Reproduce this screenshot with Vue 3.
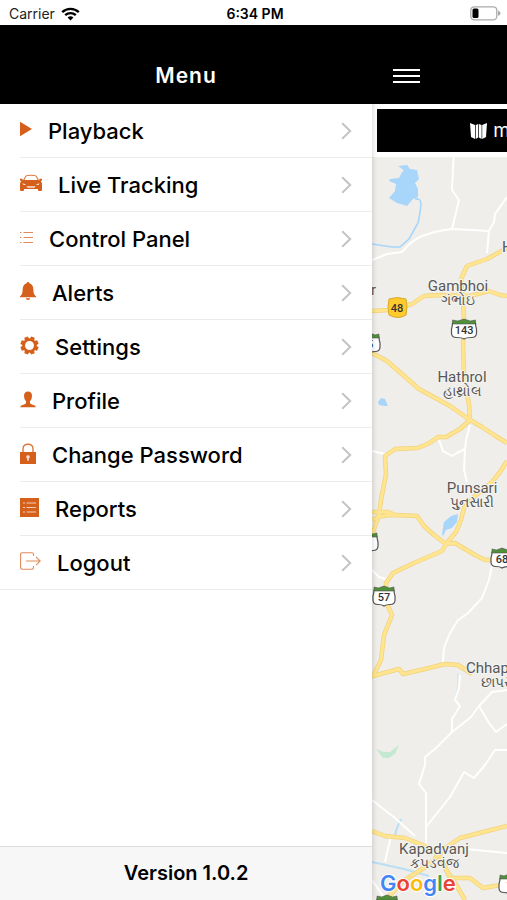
<script setup>
const items = [
  { label: 'Playback', icon: 'play', w: 12, h: 16 },
  { label: 'Live Tracking', icon: 'car', w: 22, h: 18 },
  { label: 'Control Panel', icon: 'list', w: 13, h: 13 },
  { label: 'Alerts', icon: 'bell', w: 16, h: 20 },
  { label: 'Settings', icon: 'gear', w: 19, h: 19 },
  { label: 'Profile', icon: 'person', w: 16, h: 17 },
  { label: 'Change Password', icon: 'lock', w: 16, h: 21 },
  { label: 'Reports', icon: 'report', w: 19, h: 19 },
  { label: 'Logout', icon: 'exit', w: 21, h: 18 }
]

const minorRoads = [
  'M454 150 452 190 459 200 452 229',
  'M372 260 387 254 402 252 Q411 241 420 237 Q434 231 452 229 L489 231 494 222 495 214 507 197',
  'M489 231 487 253',
  'M439 440 443 451 452 456 457 453 465 449 466 440 470 425',
  'M465 449 464 470 467 482',
  'M372 451 385 454',
  'M372 570 379 577 388 580',
  'M492 565 489 580 482 598 467 614 458 620 449 635 444 648 443 662',
  'M460 675 459 688 455 700 460 706 452 719 452 732 436 748 425 757 425 765 419 784 426 793 426 845',
  'M452 732 471 717 479 706 492 692 507 690',
  'M479 706 489 723 496 732 507 724',
  'M426 827 450 797 464 772 474 778 485 765 495 750 507 750',
  'M372 800 395 818 415 836',
  'M385 862 391 836',
  'M465 849 507 853',
  'M372 880 386 900'
]

const majorRoads = [
  'M372 311 388 310 412 304 424 296 440 295 470 296 489 291 500 295 507 296',
  'M507 248 487 259 467 266 461 279 463 300 464 320 463 345 464 375 469 405 470 420',
  'M372 353 387 361 419 389 450 406 470 420 482 427 494 435 507 443',
  'M470 420 460 429 446 437 438 437 Q428 445 417 448 L395 449 385 456 386 474 381 500 379 515 372 535',
  'M507 461 500 472 492 482 475 496 464 508 461 520 456 532 446 544',
  'M372 520 Q380 515 395 515 L417 516 424 526 434 535 446 544 455 543 475 555 485 560 500 560',
  'M372 512 388 512 395 515',
  'M446 544 442 551 414 563 393 573 386 583 386 602 392 615 384 635 381 660 373 676 399 669 403 674 425 669 445 664 458 665 472 674',
  'M372 831 385 836 405 838 425 846 440 856',
  'M507 826 460 838 445 848 430 864 405 880 385 900',
  'M440 856 450 878 470 878 483 888 507 884',
  'M445 868 455 883 465 900'
]

const shields = [
  { x: 464, y: 329, n: '143', w: 25 },
  { x: 370, y: 343, n: '5', w: 20 },
  { x: 368, y: 542, n: '6', w: 20 },
  { x: 384, y: 596, n: '57', w: 22 },
  { x: 502, y: 558, n: '68', w: 22 },
  { x: 509, y: 884, n: '1', w: 20 },
  { x: 387, y: 905, n: '', w: 22 }
]

const places = [
  { x: 458, y: 291, name: 'Gambhoi', local: 'ગંભોઇ' },
  { x: 462, y: 382, name: 'Hathrol', local: 'હાથ્રોલ' },
  { x: 472, y: 493, name: 'Punsari', local: 'પુનસારી' },
  { x: 434, y: 854, name: 'Kapadvanj', local: 'કપડવંજ' }
]
</script>

<template>
  <div class="screen">
    <header class="status">
      <span class="carrier">
        Carrier
        <svg class="wifi" viewBox="0 0 19 14" width="19" height="14" aria-hidden="true">
          <path d="M1.2 5.2a12 12 0 0 1 16.6 0" />
          <path d="M4.2 8.2a7.7 7.7 0 0 1 10.6 0" />
          <path class="dot" d="M6.6 10.6a4.2 4.2 0 0 1 5.8 0L9.5 13.6z" />
        </svg>
      </span>
      <time class="clock">6:34 PM</time>
      <svg class="battery" viewBox="0 0 31 15" width="31" height="15" aria-hidden="true">
        <rect x=".8" y=".8" width="26" height="13" rx="3.5" fill="#fff" stroke="#aaa" stroke-width="1.3" />
        <rect x="2.5" y="2.5" width="6" height="9.5" rx="1.5" fill="#000" />
        <path d="M28 4.500v5.500q2.500-1 2.500-2.700T28 4.500z" fill="#aaa" />
      </svg>
    </header>

    <div class="panes">
      <aside class="drawer">
        <div class="bar title-bar"><h1>Menu</h1></div>
        <nav class="menu">
          <a v-for="item in items" :key="item.label" class="row" href="#">
            <svg class="icon" :width="item.w" :height="item.h" :viewBox="`0 0 ${item.w} ${item.h}`" aria-hidden="true">
              <path v-if="item.icon === 'play'" d="M0 .8 12 8 0 15.200z" />
              <g v-else-if="item.icon === 'car'">
                <path d="M3.300 7 5.500 2.800Q6 1.600 7.500 1.500Q11 1 14.500 1.500Q16 1.600 16.500 2.800L18.700 7" fill="none" stroke="#dc7a3c" stroke-width="1.100" />
                <path d="M0 4.800h2.600v1.500L4 6h14l1.400.3V4.800H22v1.700l-1.300.5Q22 8.500 22 10v6q0 1-1 1h-2q-1 0-1-1v-1H4v1q0 1-1 1H1q-1 0-1-1v-6q0-1.500 1.300-3L0 6.500z" />
                <path d="M2.500 9.200 5.500 10.300v.8H3.500zM19.500 9.200 16.500 10.300v.8h2zM6.500 12.200h9l-1 1.600h-7z" fill="#fff" opacity=".85" />
              </g>
              <path v-else-if="item.icon === 'list'" d="M0 1.500h1.500M3.500 1.500H13M0 6.500h1.500M3.500 6.500H13M0 11.500h1.500M3.500 11.500H13" fill="none" stroke="#e08b59" stroke-width="1.100" />
              <path v-else-if="item.icon === 'bell'" d="M8 1q1.200 0 1.400 1.300Q13 3.300 13.300 8q.1 4.500 1.200 5.800L16 15.500v.8H0v-.8l1.500-1.700Q2.600 12.500 2.700 8 3 3.300 6.600 2.300 6.800 1 8 1zM5.800 17.200h4.400Q10 19 8 19t-2.200-1.800z" />
              <g v-else-if="item.icon === 'gear'">
                <circle cx="9.500" cy="9.500" r="5.800" fill="none" stroke="#d5601b" stroke-width="2.600" />
                <g v-for="a in 8" :key="a" :transform="`rotate(${a * 45 + 22.5} 9.5 9.5)`">
                  <path d="M7 3.500 7.700.4h3.600l.7 3.100z" />
                </g>
              </g>
              <path v-else-if="item.icon === 'person'" d="M8 .5q4 0 4 4.500 0 3.500-2 5.200v1.900q0 1 2 1.400 3.500.7 4 2.800H0q.5-2.100 4-2.800 2-.4 2-1.400v-1.900Q4 8.500 4 5 4 .5 8 .5z" />
              <g v-else-if="item.icon === 'lock'">
                <path d="M3 9V6Q3 1.200 8 1.200T13 6v3" fill="none" stroke="#dc7a3c" stroke-width="1.400" />
                <path d="M0 9h16v12H0z" />
                <path d="M8 12.200a1.800 1.800 0 0 1 .8 3.400v2.200H7.200v-2.200a1.800 1.800 0 0 1 .8-3.400z" fill="#fff" opacity=".8" />
              </g>
              <g v-else-if="item.icon === 'report'">
                <path d="M0 0h19v19H0z" />
                <path d="M3 5h2M6.500 5H16M3 9.500h2M6.500 9.500H16M3 14h2M6.500 14H16" fill="none" stroke="#f6cdb4" stroke-width="1.200" />
              </g>
              <path v-else d="M13.500 4V2.500Q13.500.8 11.800.8H2.300Q.6.800.6 2.500v13q0 1.700 1.700 1.700h9.500q1.700 0 1.700-1.700V14M6 9h14M16 4.800 20.200 9 16 13.200" fill="none" stroke="#e08b59" stroke-width="1.100" />
            </svg>
            <span class="label">{{ item.label }}</span>
            <svg class="chevron" viewBox="0 0 11 18" width="11" height="18" aria-hidden="true">
              <path d="m1.200 1.200 8 7.800-8 7.800" />
            </svg>
          </a>
        </nav>
        <footer class="version">Version 1.0.2</footer>
      </aside>

      <main class="content">
        <div class="bar">
          <button class="burger" type="button" aria-label="Toggle menu"><i></i><i></i><i></i></button>
        </div>
        <div class="tools">
          <button class="map-button" type="button">
            <svg viewBox="0 0 17 16" width="17" height="16" aria-hidden="true">
              <path d="M0 0 5 2v14l-4-2zM5.700 2 8.200 1v13.500L5.700 16zM8.900 1l2.700 1v14l-2.700-1.500zM12.200 2 17 0l-1 14-3.800 2z" fill="#fff" />
            </svg>
            map
          </button>
        </div>
        <svg class="map" viewBox="372 157 135 743" preserveAspectRatio="xMinYMin slice" role="img" aria-label="Map">
          <path d="M398 166l9-1 3 4 7 1 2 9-4 4 3 6v8l-5 2-6 7-10-3-8-5 6-7 1-7-7-3 1-2 9-1 3-6 2-1-3-3z" fill="#a8d6fb" />
          <path d="M415 199q6-1 6 5l-1 9-2 10-9 16-9 8h-8l-20-3" fill="none" stroke="#a8d6fb" stroke-width="1.600" />
          <path d="M378 402l3-4 4 1 3 7h-3l-6-1z" fill="#a8d6fb" />
          <path d="M442 534l2-12 7-6 7-2-1 8-5 6-6 2-3 6z" fill="#a8d6fb" />
          <path d="M376 749l8 3 6 0 9-7-4 9-6 4h-6z" fill="#c5e9d0" />
          <path d="M401 819l-4 9-2 7M372 862l32 7 25 7" fill="none" stroke="#b9dff5" stroke-width="2" />
          <path d="M458 673v14l-2 8" fill="none" stroke="#d5e7ee" stroke-width="1.500" />
          <path v-for="d in minorRoads" :key="d" :d="d" class="minor" />
          <path v-for="d in majorRoads" :key="'c' + d" :d="d" class="casing" />
          <path v-for="d in majorRoads" :key="'m' + d" :d="d" class="major" />
          <path d="M389 299q8-3 17 0 2 8 0 16-8 5-17 0-2-8 0-16z" fill="#fdcb2e" stroke="#d9a92a" />
          <text class="num" x="397" y="312">48</text>
          <g v-for="s in shields" :key="s.x + '-' + s.y" :transform="`translate(${s.x} ${s.y})`">
            <path :d="`M${-s.w / 2 + 1} -6Q${-s.w / 2 + 1} -3 ${-s.w / 2} 0V4Q${-s.w / 2} 8.500 ${-s.w / 2 + 5} 8.500Q-2 8.500 0 10Q2 8.500 ${s.w / 2 - 5} 8.500Q${s.w / 2} 8.500 ${s.w / 2} 4V0Q${s.w / 2 - 1} -3 ${s.w / 2 - 1} -6z`" fill="#fff" stroke="#555" stroke-width="1.200" />
            <path :d="`M${-s.w / 2 + 1} -5V-9L${-s.w / 4} -8 0 -10 ${s.w / 4} -8 ${s.w / 2 - 1} -9V-5z`" fill="#4f9138" stroke="#555" stroke-width=".6" />
            <text class="num" y="5">{{ s.n }}</text>
          </g>
          <g v-for="p in places" :key="p.name" class="place">
            <text :x="p.x" :y="p.y">{{ p.name }}</text>
            <text class="local" :x="p.x" :y="p.y + 14">{{ p.local }}</text>
          </g>
          <g class="place edge">
            <text x="466" y="673">Chhapra</text>
            <text class="local" x="481" y="687">છાપરા</text>
            <text x="502" y="252">H</text>
            <text x="371" y="295">r</text>
          </g>
          <text class="google" x="380" y="891"><tspan fill="#4285f4">G</tspan><tspan fill="#ea4335">o</tspan><tspan fill="#fbbc05">o</tspan><tspan fill="#4285f4">g</tspan><tspan fill="#34a853">l</tspan><tspan fill="#ea4335">e</tspan></text>
        </svg>
      </main>
    </div>
  </div>
</template>

<style>
body {
  margin: 0;
}
</style>

<style scoped>
.screen {
  display: flex;
  flex-direction: column;
  height: 100vh;
  overflow: hidden;
  background: #fff;
  color: #000;
  font-family: Inter, "Liberation Sans", sans-serif;
}
.status {
  display: grid;
  grid-template-columns: 1fr auto 1fr;
  align-items: center;
  height: 25px;
  padding: 2px 6px 0 9px;
  box-sizing: border-box;
  font-size: 14px;
}
.carrier {
  display: flex;
  align-items: center;
  gap: 6px;
  color: #222;
}
.wifi path {
  fill: none;
  stroke: #000;
  stroke-width: 2.4;
}
.wifi .dot {
  fill: #000;
  stroke: none;
}
.clock {
  font-weight: 600;
}
.battery {
  justify-self: end;
}
.panes {
  display: flex;
  flex: 1;
  min-height: 0;
  overflow: hidden;
}
.drawer {
  position: relative;
  z-index: 1;
  display: flex;
  flex-direction: column;
  flex: 0 0 73.4%;
  background: #fff;
  box-shadow: 0 0 6px rgba(0, 0, 0, 0.2);
}
.bar {
  display: flex;
  align-items: flex-end;
  flex: none;
  height: 79px;
  padding: 0 21px 18px;
  box-sizing: border-box;
  background: #000;
}
.title-bar {
  justify-content: center;
  padding-bottom: 15px;
}
h1 {
  margin: 0;
  color: #fff;
  font-size: 21px;
  line-height: 26px;
  font-weight: 600;
  letter-spacing: 1px;
}
.menu {
  display: flex;
  flex-direction: column;
  flex: 1;
}
.row {
  display: flex;
  align-items: center;
  height: 54px;
  padding-right: 20px;
  margin-left: 20px;
  box-sizing: border-box;
  border-bottom: 1px solid #ebebeb;
  color: #000;
  text-decoration: none;
}
.row:last-child {
  margin-left: 0;
  padding-left: 20px;
}
.icon {
  flex: none;
  margin-right: 16px;
  margin-bottom: 3px;
  fill: #d5601b;
}
.label {
  flex: 1;
  font-size: 22px;
  line-height: 28px;
  font-weight: 500;
  white-space: nowrap;
}
.chevron {
  fill: none;
  stroke: #c4c4c6;
  stroke-width: 2;
}
.version {
  height: 54px;
  box-sizing: border-box;
  border-top: 1px solid #dcdcdc;
  background: #f7f7f7;
  font-size: 20px;
  line-height: 52px;
  font-weight: 600;
  text-align: center;
}
.content {
  display: flex;
  flex-direction: column;
  flex: 1;
  min-width: 0;
}
.burger {
  display: flex;
  flex-direction: column;
  gap: 4px;
  width: 27px;
  padding: 0 0 3px;
  border: 0;
  background: none;
}
.burger i {
  height: 2px;
  background: #fff;
}
.tools {
  flex: none;
  height: 53px;
  padding: 5px 0 5px 5px;
  box-sizing: border-box;
  background: #fff;
  overflow: hidden;
}
.map-button {
  display: flex;
  align-items: center;
  gap: 6px;
  width: 240px;
  height: 43px;
  padding: 0 0 0 93px;
  border: 0;
  background: #000;
  color: #fff;
  font-family: inherit;
  font-size: 19px;
}
.map {
  display: block;
  flex: 1;
  width: 100%;
  min-height: 0;
  background: #efeeea;
}
.minor,
.casing,
.major {
  fill: none;
  stroke-linejoin: round;
}
.minor {
  stroke: #fff;
  stroke-width: 2;
}
.casing {
  stroke: #f2d27c;
  stroke-width: 4.5;
}
.major {
  stroke: #ffe590;
  stroke-width: 3;
}
.num {
  fill: #333;
  font: 500 11px Roboto, sans-serif;
  text-anchor: middle;
}
.place {
  fill: #585858;
  stroke: #f5f4f0;
  stroke-width: 2px;
  paint-order: stroke;
  font: 400 15px Roboto, "Noto Sans", sans-serif;
  text-anchor: middle;
}
.edge {
  text-anchor: start;
}
.local {
  font-size: 14px;
}
.google {
  stroke: #fff;
  stroke-width: 2px;
  paint-order: stroke;
  font: 600 22px Inter, sans-serif;
}
</style>
